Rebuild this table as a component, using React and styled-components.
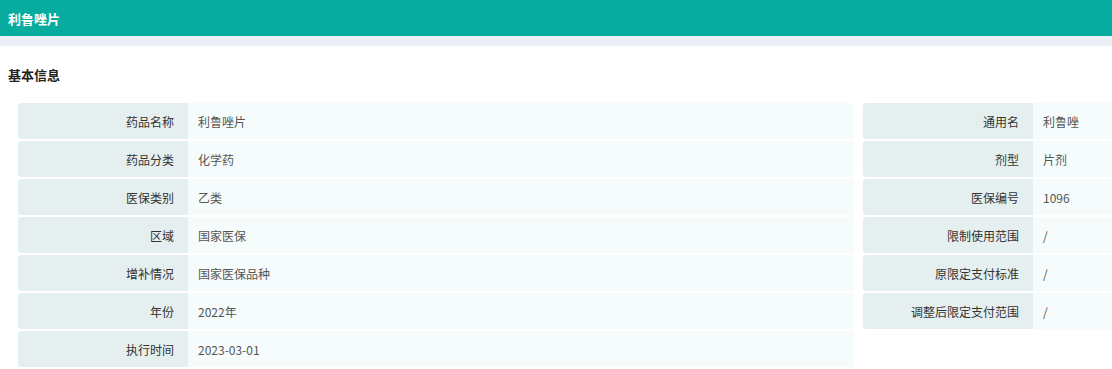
import React from "react";
import styled, { createGlobalStyle } from "styled-components";

const GlobalStyle = createGlobalStyle`
  body {
    margin: 0;
    background: #fff;
    font-family: "Noto Sans CJK SC", "Noto Sans", sans-serif;
  }
`;

const Header = styled.header`
  height: 36px;
  background: #08ac9f;
  color: #fff;
  font-size: 13px;
  font-weight: 700;
  display: flex;
  align-items: center;
  padding-left: 8px;
`;

const Strip = styled.div`
  height: 10px;
  background: #ebf0f7;
`;

const SectionTitle = styled.h3`
  margin: 19px 0 18px 8px;
  font-size: 13px;
  line-height: 20px;
  font-weight: 700;
  color: #222;
`;

const Grid = styled.div`
  display: grid;
  grid-template-columns: 835px 1fr;
  column-gap: 10px;
  padding-left: 18px;
  align-items: start;
`;

const Column = styled.div`
  display: flex;
  flex-direction: column;
  gap: 2px;
`;

const Row = styled.div`
  display: flex;
  height: 36px;
  font-size: 12px;
`;

const Label = styled.div`
  width: 170px;
  flex-shrink: 0;
  box-sizing: border-box;
  padding-right: 14px;
  display: flex;
  align-items: center;
  justify-content: flex-end;
  background: #e6eff0;
  color: #333;
  border-radius: 3px 0 0 3px;
`;

const Value = styled.div`
  flex: 1;
  padding-left: 10px;
  display: flex;
  align-items: center;
  background: #f6fbfb;
  color: #555;
`;

const left = [
  ["药品名称", "利鲁唑片"],
  ["药品分类", "化学药"],
  ["医保类别", "乙类"],
  ["区域", "国家医保"],
  ["增补情况", "国家医保品种"],
  ["年份", "2022年"],
  ["执行时间", "2023-03-01"],
];

const right = [
  ["通用名", "利鲁唑"],
  ["剂型", "片剂"],
  ["医保编号", "1096"],
  ["限制使用范围", "/"],
  ["原限定支付标准", "/"],
  ["调整后限定支付范围", "/"],
];

const Field = ({ label, value }) => (
  <Row>
    <Label>{label}</Label>
    <Value>{value}</Value>
  </Row>
);

export default function App() {
  return (
    <>
      <GlobalStyle />
      <Header>利鲁唑片</Header>
      <Strip />
      <SectionTitle>基本信息</SectionTitle>
      <Grid>
        <Column>
          {left.map(([l, v]) => (
            <Field key={l} label={l} value={v} />
          ))}
        </Column>
        <Column>
          {right.map(([l, v]) => (
            <Field key={l} label={l} value={v} />
          ))}
        </Column>
      </Grid>
    </>
  );
}
